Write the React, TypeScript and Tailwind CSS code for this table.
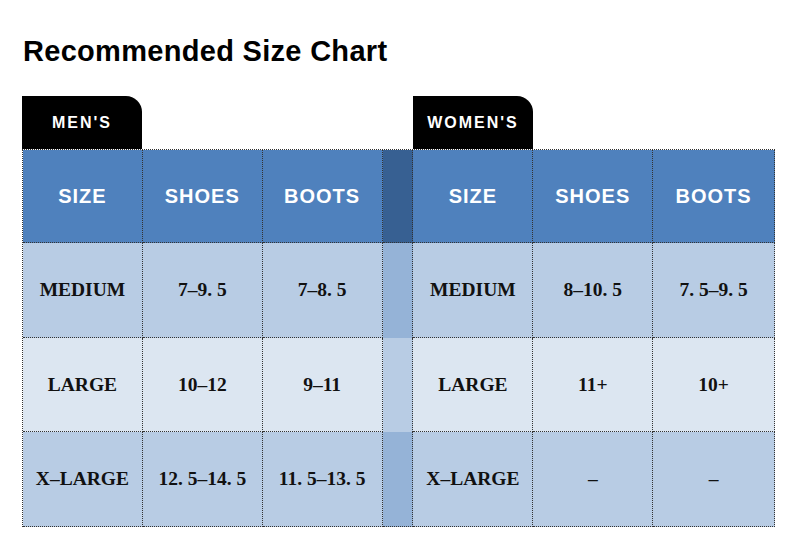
import React from "react";

const HEAD = "bg-[#4f81bd]";
const DARK = "bg-[#b8cce4]";
const LIGHT = "bg-[#dce6f1]";

const bd = "border-dotted border-[#333]";

function HeadCell({ children, w }: { children: React.ReactNode; w: string }) {
  return (
    <div
      className={`${w} h-full ${HEAD} ${bd} border-r border-b flex items-center justify-center text-white font-bold text-[20px] tracking-[1px] [font-family:'Liberation_Sans',Arial,sans-serif]`}
    >
      {children}
    </div>
  );
}

function BodyCell({ children, w, bg }: { children: React.ReactNode; w: string; bg: string }) {
  return (
    <div
      className={`${w} h-full ${bg} ${bd} border-r border-b flex items-center justify-center text-[#111] font-bold text-[19.5px] [font-family:'Liberation_Serif','Times_New_Roman',serif]`}
    >
      {children}
    </div>
  );
}

function Sep({ bg, noBottom }: { bg: string; noBottom?: boolean }) {
  return <div className={`w-[31px] h-full ${bg} ${bd} border-r ${noBottom ? "" : "border-b"}`} />;
}

const rows = [
  { h: "h-[95px]", bg: DARK, sep: "bg-[#95b3d7]", m: ["MEDIUM", "7–9. 5", "7–8. 5"], f: ["MEDIUM", "8–10. 5", "7. 5–9. 5"] },
  { h: "h-[94px]", bg: LIGHT, sep: "bg-[#b8cce4]", m: ["LARGE", "10–12", "9–11"], f: ["LARGE", "11+", "10+"] },
  { h: "h-[95px]", bg: DARK, sep: "bg-[#95b3d7]", m: ["X–LARGE", "12. 5–14. 5", "11. 5–13. 5"], f: ["X–LARGE", "–", "–"] },
];

export default function App() {
  return (
    <div className="w-[800px] h-[553px] bg-white overflow-hidden pl-[22px]">
      <h1 className="pt-[34px] pl-[1px] h-[96px] text-[29px] tracking-[0.3px] leading-[34px] text-black font-bold [font-family:'Liberation_Sans',Arial,sans-serif]">
        Recommended Size Chart
      </h1>
      <div className="flex h-[53px]">
        <div className="w-[120px] h-full bg-black rounded-tr-[16px] flex items-center justify-center text-white font-bold text-[16px] tracking-[2px] [font-family:'Liberation_Sans',Arial,sans-serif]">
          MEN'S
        </div>
        <div className="w-[271px]" />
        <div className="w-[120px] h-full bg-black rounded-tr-[16px] flex items-center justify-center text-white font-bold text-[16px] tracking-[2px] [font-family:'Liberation_Sans',Arial,sans-serif]">
          WOMEN'S
        </div>
      </div>
      <div className={`w-[753px] ${bd} border-t border-l`}>
        <div className="flex h-[93px]">
          <HeadCell w="w-[120px]">SIZE</HeadCell>
          <HeadCell w="w-[120px]">SHOES</HeadCell>
          <HeadCell w="w-[120px]">BOOTS</HeadCell>
          <Sep bg="bg-[#376092]" />
          <HeadCell w="w-[120px]">SIZE</HeadCell>
          <HeadCell w="w-[120px]">SHOES</HeadCell>
          <HeadCell w="w-[122px]">BOOTS</HeadCell>
        </div>
        {rows.map((r, i) => (
          <div key={i} className={`flex ${r.h}`}>
            <BodyCell w="w-[120px]" bg={r.bg}>{r.m[0]}</BodyCell>
            <BodyCell w="w-[120px]" bg={r.bg}>{r.m[1]}</BodyCell>
            <BodyCell w="w-[120px]" bg={r.bg}>{r.m[2]}</BodyCell>
            <Sep bg={r.sep} noBottom={i < 2} />
            <BodyCell w="w-[120px]" bg={r.bg}>{r.f[0]}</BodyCell>
            <BodyCell w="w-[120px]" bg={r.bg}>{r.f[1]}</BodyCell>
            <BodyCell w="w-[122px]" bg={r.bg}>{r.f[2]}</BodyCell>
          </div>
        ))}
      </div>
    </div>
  );
}
